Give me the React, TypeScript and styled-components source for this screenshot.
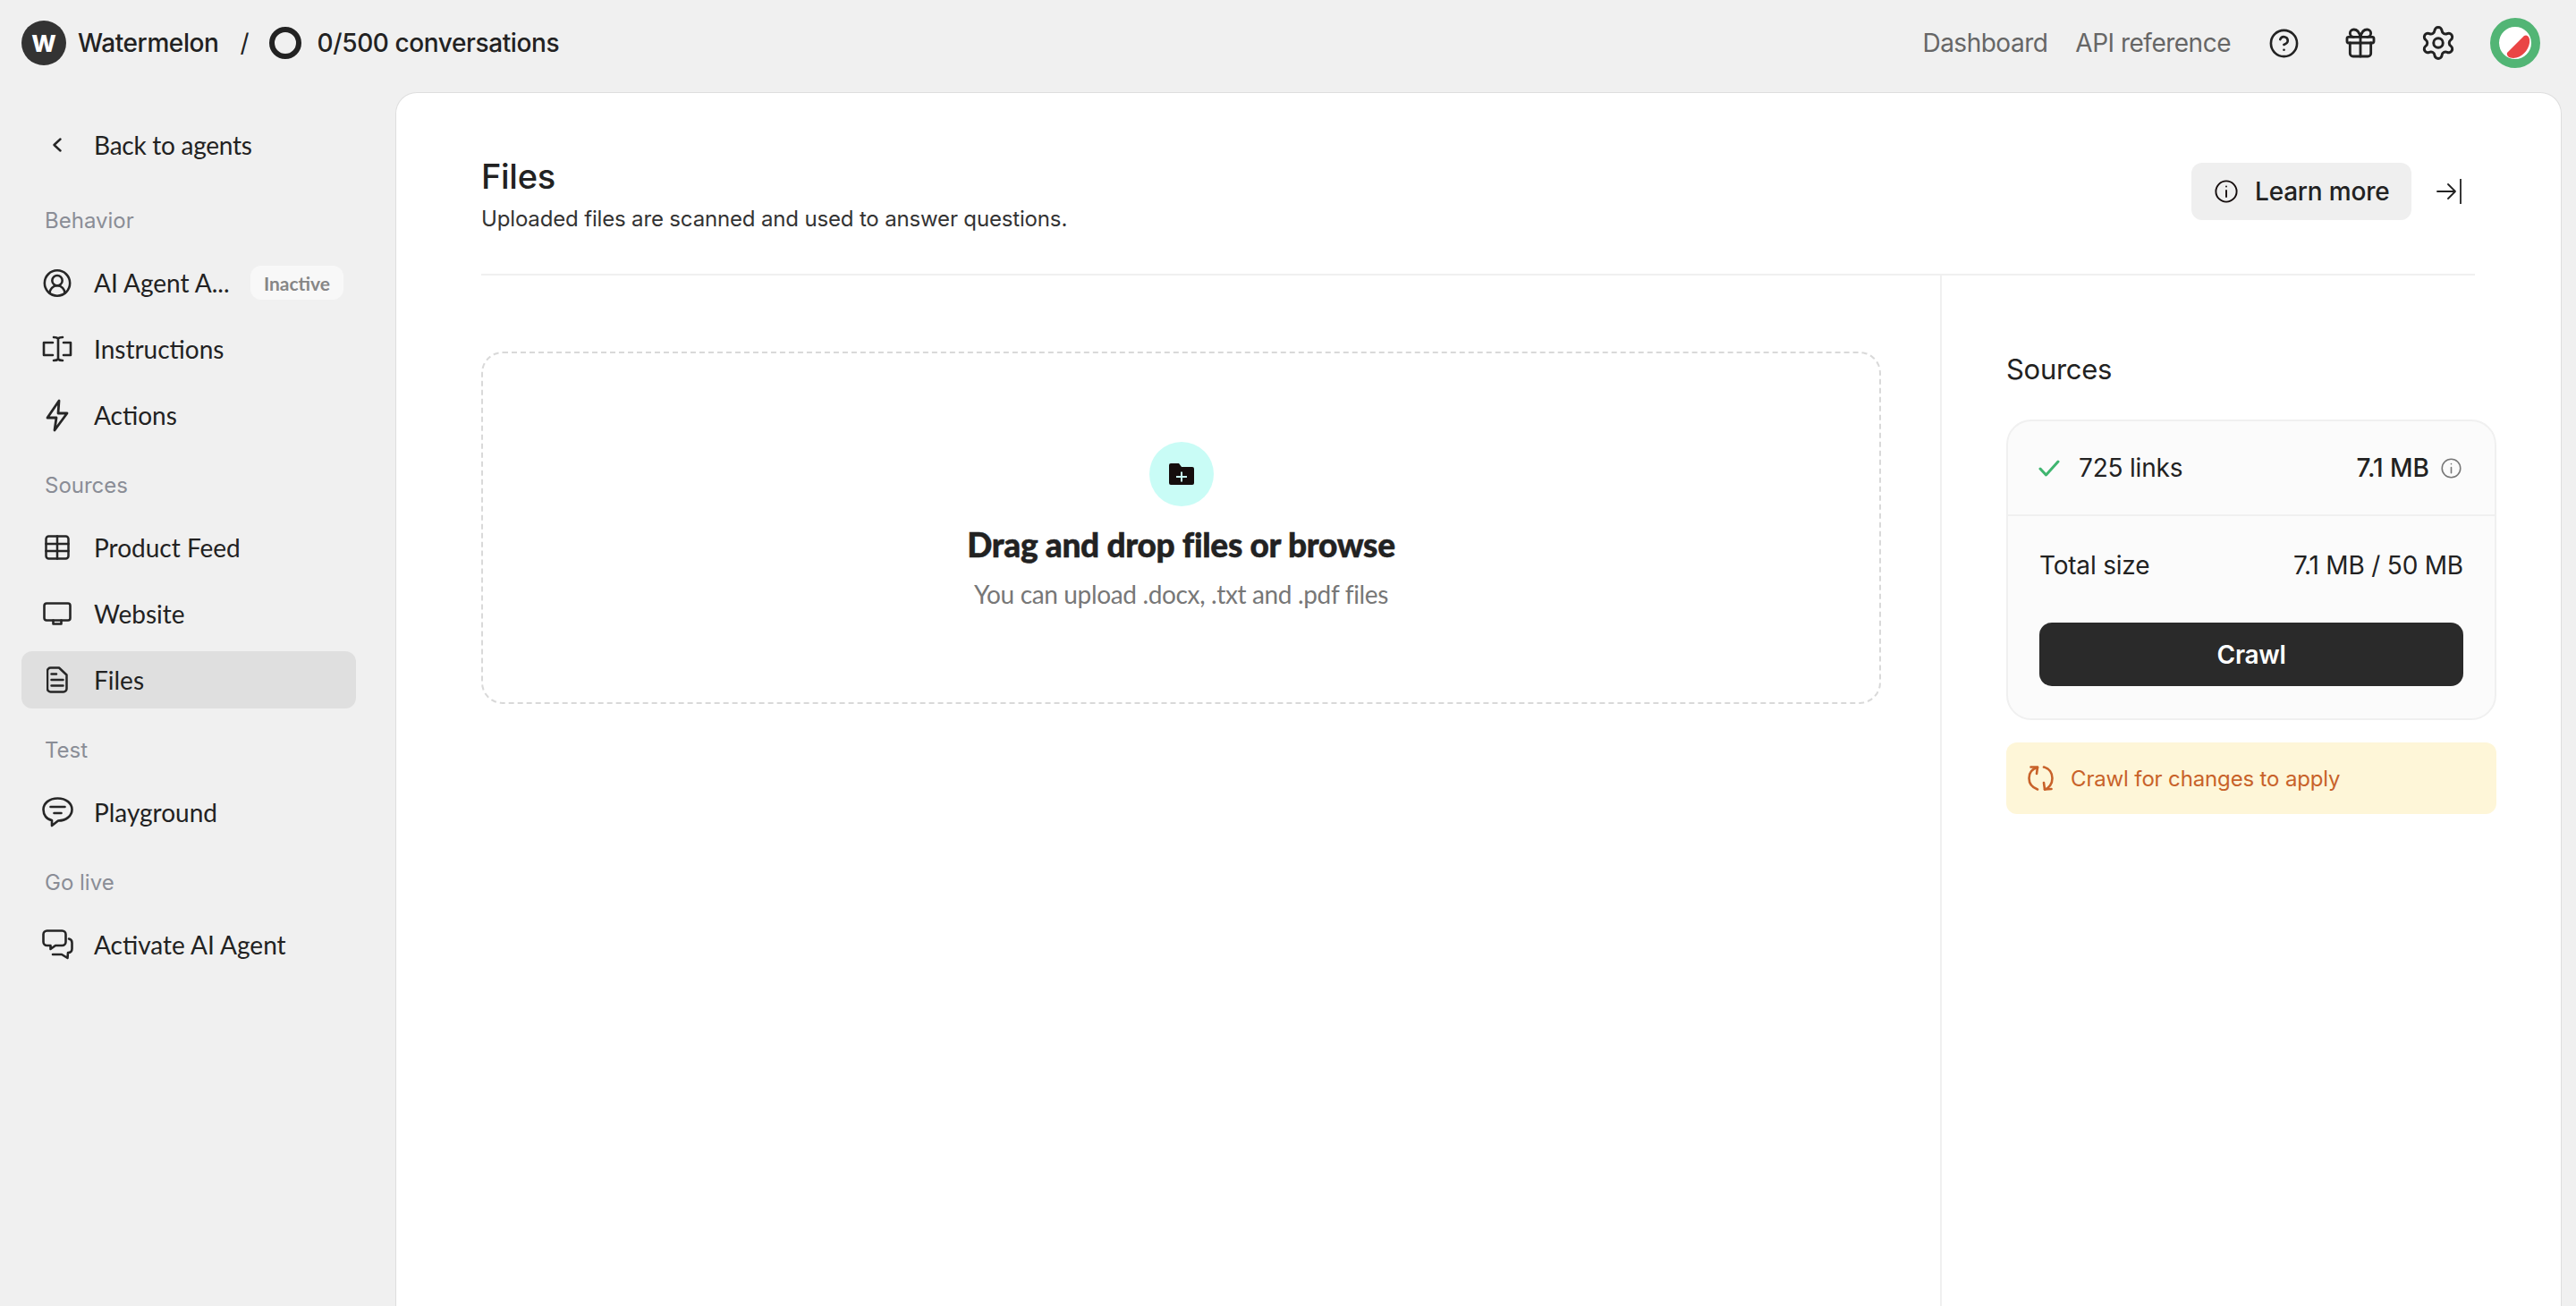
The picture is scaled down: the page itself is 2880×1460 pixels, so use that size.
import React from 'react'
import styled, { createGlobalStyle } from 'styled-components'
import { CircleHelp, CircleUserRound, Gift, Settings } from 'lucide-react'

const GlobalStyle = createGlobalStyle`
	* {
		box-sizing: border-box;
	}
	html, body {
		margin: 0;
		height: 100%;
		overflow: hidden;
		background: #f0f0f0;
		font-family: Inter, "Liberation Sans", sans-serif;
		color: #222;
	}
`

const Page = styled.div`
	display: flex;
	flex-direction: column;
	height: 100vh;
	overflow: hidden;
`

const TopBar = styled.header`
	display: flex;
	align-items: center;
	justify-content: space-between;
	flex: none;
	height: 103px;
	padding: 0 40px 7px 24px;
`

const TopLeft = styled.div`
	display: flex;
	align-items: center;
`

const TopRight = styled.div`
	display: flex;
	align-items: center;
	color: #222;
`

const LogoMark = styled.div`
	display: flex;
	align-items: center;
	justify-content: center;
	width: 50px;
	height: 50px;
	border-radius: 50%;
	background: #333;
	color: #fff;
	font-size: 26px;
	font-weight: 800;
`

const BrandName = styled.span`
	margin-left: 13px;
	font-size: 28px;
	font-weight: 500;
	letter-spacing: -0.4px;
`

const Slash = styled.span`
	margin: 0 22px 0 24px;
	font-size: 28px;
	font-weight: 400;
`

const UsageRing = styled.div`
	width: 36px;
	height: 36px;
	border: 6px solid #222;
	border-radius: 50%;
`

const UsageText = styled.span`
	margin-left: 18px;
	font-size: 28px;
	font-weight: 500;
	letter-spacing: -0.4px;
`

const TopLink = styled.a<{ $gap: number }>`
	margin-right: ${p => p.$gap}px;
	font-size: 28px;
	letter-spacing: -0.5px;
	color: #666;
`

const TopIcon = styled.span<{ $gap: number }>`
	display: flex;
	margin-right: ${p => p.$gap}px;
`

const Layout = styled.div`
	display: flex;
	flex: 1;
	min-height: 0;
`

const Sidebar = styled.nav`
	display: flex;
	flex-direction: column;
	flex: none;
	width: 442px;
	padding: 27px 44px 0 24px;
`

const NavGroup = styled.div`
	display: flex;
	flex-direction: column;
	gap: 10px;
`

const GroupLabel = styled.div`
	height: 30px;
	margin: 31px 0 23px 26px;
	font-size: 24px;
	line-height: 32px;
	color: #8a8d96;
`

const NavRow = styled.a<{ $active?: boolean }>`
	display: flex;
	align-items: center;
	flex: none;
	height: 64px;
	padding: 0 14px 0 23px;
	border-radius: 12px;
	background: ${p => (p.$active ? '#dfdfdf' : 'transparent')};
	font-family: Lato, "Liberation Sans", sans-serif;
	font-size: 28px;
	color: #222;
`

const BackRow = styled(NavRow)`
	margin-bottom: 6px;
	letter-spacing: -0.25px;
`

const NavIcon = styled.span`
	display: flex;
	align-items: center;
	justify-content: center;
	flex: none;
	width: 34px;
	margin-right: 24px;
	color: #262626;
`

const NavText = styled.span`
	flex: 1;
	white-space: nowrap;
`

const StatusBadge = styled.span`
	flex: none;
	display: flex;
	align-items: center;
	justify-content: center;
	width: 104px;
	height: 38px;
	border-radius: 12px;
	background: #f8f8f8;
	font-size: 21px;
	font-weight: 700;
	color: #868686;
`

const Panel = styled.main`
	display: flex;
	flex-direction: column;
	flex: 1;
	min-width: 0;
	margin-right: 16px;
	border: 1px solid #dedede;
	border-bottom: none;
	border-radius: 24px 24px 0 0;
	background: #fff;
`

const PanelHeader = styled.div`
	display: flex;
	justify-content: space-between;
	flex: none;
	height: 204px;
	margin: 0 96px 0 95px;
	border-bottom: 2px solid #f0f0f0;
`

const TitleBlock = styled.div`
	padding-top: 69px;
`

const Title = styled.h1`
	margin: 0;
	font-size: 38px;
	font-weight: 500;
	line-height: 48px;
	letter-spacing: -0.3px;
	color: #222;
`

const Subtitle = styled.p`
	margin: 8px 0 0;
	font-size: 24px;
	line-height: 32px;
	letter-spacing: -0.16px;
	color: #333;
`

const HeaderActions = styled.div`
	display: flex;
	align-items: center;
	gap: 28px;
	height: 64px;
	margin-top: 78px;
	padding-right: 15px;
`

const LearnMore = styled.button`
	display: flex;
	align-items: center;
	gap: 19px;
	width: 246px;
	height: 64px;
	padding: 0 0 0 26px;
	border: none;
	border-radius: 12px;
	background: #efefef;
	font-family: inherit;
	font-size: 28px;
	font-weight: 500;
	letter-spacing: -0.2px;
	color: #222;
`

const PanelBody = styled.div`
	display: flex;
	flex: 1;
	min-height: 0;
	padding: 0 72px 0 95px;
`

const UploadColumn = styled.section`
	flex: 1;
	min-width: 0;
	padding: 85px 66px 0 0;
	border-right: 2px solid #f0f0f0;
`

const DropZone = styled.div`
	display: flex;
	flex-direction: column;
	align-items: center;
	height: 394px;
	padding-top: 99px;
	border: 2px dashed #d9d9d9;
	border-radius: 24px;
`

const UploadBubble = styled.div`
	display: flex;
	align-items: center;
	justify-content: center;
	width: 72px;
	height: 72px;
	border-radius: 50%;
	background: #c9fcf6;
`

const DropTitle = styled.div`
	margin-top: 19px;
	font-family: Lato, "Liberation Sans", sans-serif;
	font-size: 37px;
	font-weight: 900;
	line-height: 48px;
	letter-spacing: -0.3px;
	-webkit-text-stroke: 0.5px #222;
	color: #222;
`

const DropHint = styled.div`
	margin-top: 11px;
	font-family: Lato, "Liberation Sans", sans-serif;
	font-size: 28px;
	line-height: 40px;
	letter-spacing: -0.35px;
	color: #777;
`

const SourcesColumn = styled.aside`
	flex: none;
	width: 620px;
	padding: 85px 0 0 72px;
`

const SourcesHeading = styled.h2`
	margin: 0 0 36px;
	font-size: 31px;
	font-weight: 400;
	line-height: 40px;
	letter-spacing: -0.3px;
	color: #222;
`

const SourcesCard = styled.div`
	height: 336px;
	border: 2px solid #f0f0f0;
	border-radius: 28px;
	background: #fbfbfb;
`

const LinksRow = styled.div`
	display: flex;
	align-items: center;
	justify-content: space-between;
	height: 106px;
	padding: 0 37px 0 34px;
	border-bottom: 2px solid #f0f0f0;
`

const LinksLabel = styled.div`
	display: flex;
	align-items: center;
	gap: 21px;
	font-size: 28px;
	letter-spacing: -0.2px;
	color: #222;
`

const LinksSize = styled.div`
	display: flex;
	align-items: center;
	gap: 13px;
	font-size: 28px;
	font-weight: 500;
	color: #222;
`

const CardFooter = styled.div`
	padding: 0 35px;
`

const TotalRow = styled.div`
	display: flex;
	align-items: center;
	justify-content: space-between;
	height: 110px;
	margin-bottom: 9px;
	font-size: 28px;
	letter-spacing: -0.2px;
	color: #222;
`

const CrawlButton = styled.button`
	display: block;
	width: 100%;
	height: 71px;
	border: none;
	border-radius: 14px;
	background: #2a2a2a;
	font-family: inherit;
	font-size: 28px;
	font-weight: 600;
	letter-spacing: -0.3px;
	color: #fff;
`

const Notice = styled.div`
	display: flex;
	align-items: center;
	gap: 19px;
	height: 80px;
	margin-top: 25px;
	padding-left: 24px;
	border-radius: 12px;
	background: #fef6d8;
	font-size: 24px;
	letter-spacing: -0.15px;
	color: #c8622a;
`

const LineIcon = styled.svg`
	display: block;
	flex: none;
	fill: none;
	stroke: currentColor;
	stroke-linecap: round;
	stroke-linejoin: round;
`

const InfoIcon: React.FC<{ size: number; color: string; weight: number }> = ({ size, color, weight }) => (
	<LineIcon width={size} height={size} viewBox="0 0 26 26" style={{ color }} strokeWidth={weight}>
		<circle cx="13" cy="13" r="11.6" />
		<path d="M13 12v7M13 7.4v.2" />
	</LineIcon>
)

const App: React.FC = () => {
	return (
		<Page>
			<GlobalStyle />
			<TopBar>
				<TopLeft>
					<LogoMark>W</LogoMark>
					<BrandName>Watermelon</BrandName>
					<Slash>/</Slash>
					<UsageRing />
					<UsageText>0/500 conversations</UsageText>
				</TopLeft>
				<TopRight>
					<TopLink $gap={31}>Dashboard</TopLink>
					<TopLink $gap={42}>API reference</TopLink>
					<TopIcon $gap={48}>
						<CircleHelp size={35} strokeWidth={1.8} />
					</TopIcon>
					<TopIcon $gap={46}>
						<Gift size={40} strokeWidth={1.7} />
					</TopIcon>
					<TopIcon $gap={37}>
						<Settings size={42} strokeWidth={1.7} />
					</TopIcon>
					<svg width="56" height="56" viewBox="0 0 56 56">
						<circle cx="28" cy="28" r="23" fill="#fff" stroke="#52b575" strokeWidth="10" />
						<path d="M19 39 L38 20 C42 18 45 22 44 28 C43 36 35 45 26 45 C21 45 18 42 19 39 Z" fill="#ea4545" />
					</svg>
				</TopRight>
			</TopBar>
			<Layout>
				<Sidebar>
					<BackRow>
						<NavIcon>
							<LineIcon width="12" height="16" viewBox="0 0 12 16" strokeWidth="2.4">
								<path d="M9.5 1.5 L2.5 8 L9.5 14.5" />
							</LineIcon>
						</NavIcon>
						<NavText>Back to agents</NavText>
					</BackRow>

					<GroupLabel>Behavior</GroupLabel>
					<NavGroup>
						<NavRow>
							<NavIcon>
								<CircleUserRound size={35} strokeWidth={1.8} />
							</NavIcon>
							<NavText>AI Agent A...</NavText>
							<StatusBadge>Inactive</StatusBadge>
						</NavRow>
						<NavRow>
							<NavIcon>
								<LineIcon width="34" height="30" viewBox="0 0 34 30" strokeWidth="2.6">
									<path d="M12 8 H2 V22 H12" />
									<path d="M24 8 H32 V22 H24" />
									<path d="M18 3 V27 M13 2 C15.5 2 17 2.5 18 3.5 C19 2.5 20.5 2 23 2 M13 28 C15.5 28 17 27.5 18 26.5 C19 27.5 20.5 28 23 28" />
								</LineIcon>
							</NavIcon>
							<NavText>Instructions</NavText>
						</NavRow>
						<NavRow>
							<NavIcon>
								<LineIcon width="26" height="37" viewBox="0 0 26 37" strokeWidth="2.8">
									<path d="M15 2 L2 21 H12 L10 35 L24 16 H14 Z" />
								</LineIcon>
							</NavIcon>
							<NavText>Actions</NavText>
						</NavRow>
					</NavGroup>

					<GroupLabel>Sources</GroupLabel>
					<NavGroup>
						<NavRow>
							<NavIcon>
								<LineIcon width="28" height="28" viewBox="0 0 28 28" strokeWidth="2.5">
									<rect x="1.5" y="1.5" width="25" height="25" rx="3" />
									<path d="M1.5 10 H26.5 M1.5 18 H26.5 M14 1.5 V26.5" />
								</LineIcon>
							</NavIcon>
							<NavText>Product Feed</NavText>
						</NavRow>
						<NavRow>
							<NavIcon>
								<LineIcon width="32" height="26" viewBox="0 0 32 26" strokeWidth="2.6">
									<rect x="1.5" y="1.5" width="29" height="19" rx="2.5" />
									<path d="M11.5 20.5 V24.5 H20.5 V20.5" />
								</LineIcon>
							</NavIcon>
							<NavText>Website</NavText>
						</NavRow>
						<NavRow $active>
							<NavIcon>
								<LineIcon width="24" height="30" viewBox="0 0 24 30" strokeWidth="2.5">
									<path d="M4.5 1.5 H14 L22.5 9.5 V25 a3.5 3.5 0 0 1 -3.5 3.5 H4.5 a3.5 3.5 0 0 1 -3.5 -3.5 V5 a3.5 3.5 0 0 1 3.5 -3.5 Z" />
									<path d="M5.5 8.5 H11 M5.5 15 H18.5 M5.5 21.5 H18.5" />
								</LineIcon>
							</NavIcon>
							<NavText>Files</NavText>
						</NavRow>
					</NavGroup>

					<GroupLabel>Test</GroupLabel>
					<NavGroup>
						<NavRow>
							<NavIcon>
								<LineIcon width="35" height="34" viewBox="0 0 35 34" strokeWidth="2.6">
									<path d="M11 26 C5 25 1.5 20 1.5 14 C1.5 7 8 1.5 17.5 1.5 C27 1.5 33.5 7 33.5 14 C33.5 21 27 26.5 18 26.5 L11 32 Z" />
									<path d="M9.5 11 H25.5 M13.5 18 H21.5" />
								</LineIcon>
							</NavIcon>
							<NavText>Playground</NavText>
						</NavRow>
					</NavGroup>

					<GroupLabel>Go live</GroupLabel>
					<NavGroup>
						<NavRow>
							<NavIcon>
								<LineIcon width="35" height="35" viewBox="0 0 35 35" strokeWidth="2.6">
									<path d="M5.5 1.5 H22.5 a4 4 0 0 1 4 4 V14 a4 4 0 0 1 -4 4 H15 L9.5 22 V18 H5.5 a4 4 0 0 1 -4 -4 V5.5 a4 4 0 0 1 4 -4 Z" />
									<path d="M30 10.5 C32.5 11 33.5 12.5 33.5 15 V21.5 C33.5 24.5 31.5 26 29 26 L28.5 32 L22 28 H12" />
								</LineIcon>
							</NavIcon>
							<NavText>Activate AI Agent</NavText>
						</NavRow>
					</NavGroup>
				</Sidebar>

				<Panel>
					<PanelHeader>
						<TitleBlock>
							<Title>Files</Title>
							<Subtitle>Uploaded files are scanned and used to answer questions.</Subtitle>
						</TitleBlock>
						<HeaderActions>
							<LearnMore>
								<InfoIcon size={26} color="#150d0d" weight={1.9} />
								Learn more
							</LearnMore>
							<LineIcon width="28" height="28" viewBox="0 0 28 28" strokeWidth="1.8">
								<path d="M1 14 H21 M13 6 L21 14 L13 22 M27 0.5 V27.5" />
							</LineIcon>
						</HeaderActions>
					</PanelHeader>
					<PanelBody>
						<UploadColumn>
							<DropZone>
								<UploadBubble>
									<svg width="28" height="24" viewBox="0 0 28 24">
										<path d="M2 0 H11 L14 4 H26 a2 2 0 0 1 2 2 V22 a2 2 0 0 1 -2 2 H2 a2 2 0 0 1 -2 -2 V2 a2 2 0 0 1 2 -2 Z" fill="#150d0d" />
										<path d="M8 15 H20 M14 9.5 V20.5" stroke="#c9fcf6" strokeWidth="2" fill="none" />
									</svg>
								</UploadBubble>
								<DropTitle>Drag and drop files or browse</DropTitle>
								<DropHint>You can upload .docx, .txt and .pdf files</DropHint>
							</DropZone>
						</UploadColumn>
						<SourcesColumn>
							<SourcesHeading>Sources</SourcesHeading>
							<SourcesCard>
								<LinksRow>
									<LinksLabel>
										<LineIcon width="24" height="19" viewBox="0 0 24 19" strokeWidth="3" style={{ color: '#3fb56f' }}>
											<path d="M2 10 L8.5 17 L22 2" />
										</LineIcon>
										725 links
									</LinksLabel>
									<LinksSize>
										7.1 MB
										<InfoIcon size={23} color="#777" weight={1.8} />
									</LinksSize>
								</LinksRow>
								<CardFooter>
									<TotalRow>
										<span>Total size</span>
										<span>7.1 MB / 50 MB</span>
									</TotalRow>
									<CrawlButton>Crawl</CrawlButton>
								</CardFooter>
							</SourcesCard>
							<Notice>
								<LineIcon width="29" height="28" viewBox="0 0 29 28" strokeWidth="2.6">
									<path d="M11 2 C5 3.5 1.5 8 1.5 14 C1.5 20 5.5 24.5 11 26.5" />
									<path d="M18 1.5 C24 3 27.5 8 27.5 14 C27.5 20 24 25 19 26.5" />
									<path d="M3.5 1.5 H11 L10 9 M18 19 L19 26.5 L26.5 26" />
								</LineIcon>
								Crawl for changes to apply
							</Notice>
						</SourcesColumn>
					</PanelBody>
				</Panel>
			</Layout>
		</Page>
	)
}

export default App
